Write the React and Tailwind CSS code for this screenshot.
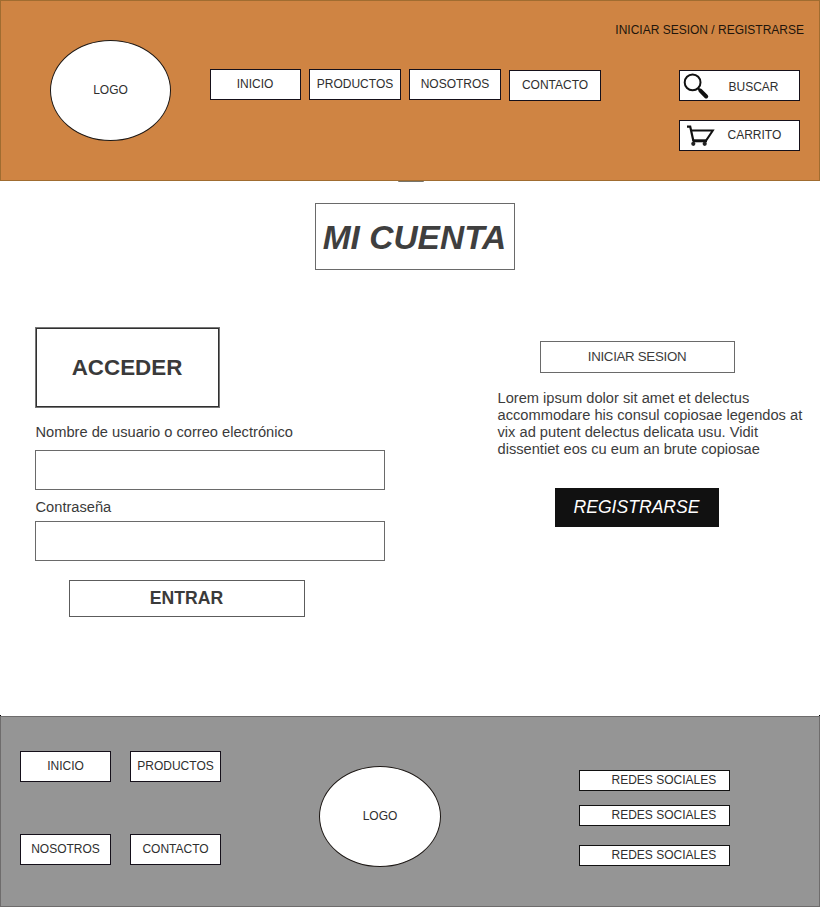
function NavBox({ label, className = 'w-[91px]' }) {
  return (
    <a className={`block h-[31px] shrink-0 border border-[#15101a] bg-white pt-[7px] text-center text-xs leading-[14px] text-[#2e2e2e] ${className}`}>
      {label}
    </a>
  )
}

function Logo({ className = '' }) {
  return (
    <div className={`flex h-[101px] shrink-0 items-center justify-center rounded-[50%] border border-[#1c1714] bg-white pb-[1px] text-xs leading-[14px] text-[#2e2e2e] ${className}`}>
      LOGO
    </div>
  )
}

function SearchIcon() {
  return (
    <svg width="28" height="28" viewBox="0 0 28 28" fill="none" stroke="#111">
      <circle cx="10.6" cy="10.4" r="7.9" strokeWidth="2" />
      <path d="M16 16.2l2.6 2.6" strokeWidth="2" />
      <path d="M18.4 18.6l5.8 5.9" strokeWidth="4" strokeLinecap="round" />
    </svg>
  )
}

function CartIcon() {
  return (
    <svg width="28" height="22" viewBox="0 0 28 22" fill="none" stroke="#111">
      <path d="M0 1.6H3.2L6.4 16" strokeWidth="2.2" />
      <path d="M4 5.6H25.8L19.2 15.4" strokeWidth="2" />
      <path d="M5.6 15.8H20" strokeWidth="3" />
      <circle cx="6.3" cy="18.8" r="2.1" fill="#222" stroke="none" />
      <circle cx="17.7" cy="18.8" r="2.1" fill="#222" stroke="none" />
    </svg>
  )
}

function Header() {
  return (
    <header className="relative flex h-[181px] items-start border border-[#a06c30] bg-[#cf8443]">
      <Logo className="mt-[39px] ml-[49px] w-[121px]" />
      <nav className="mt-[68px] ml-[39px] flex items-start gap-2">
        <NavBox label="INICIO" className="w-[91px] pr-px" />
        <NavBox label="PRODUCTOS" className="w-[92px]" />
        <NavBox label="NOSOTROS" className="w-[92px]" />
        <NavBox label="CONTACTO" className="mt-px w-[92px]" />
      </nav>
      <div className="mt-[22px] ml-auto mr-[15px] flex flex-col items-end">
        <a className="text-xs leading-[14px] whitespace-nowrap text-[#21150c]">INICIAR SESION / REGISTRARSE</a>
        <div className="mt-[33px] mr-1 flex h-[31px] w-[121px] border border-[#15101a] bg-white text-xs leading-[14px] text-[#2e2e2e]">
          <div className="mt-px ml-[2px] w-[46.5px]"><SearchIcon /></div>
          <span className="mt-[9px]">BUSCAR</span>
        </div>
        <div className="mt-[19px] mr-1 flex h-[31px] w-[121px] border border-[#15101a] bg-white text-xs leading-[14px] text-[#2e2e2e]">
          <div className="mt-1 ml-[7px] w-[40.5px]"><CartIcon /></div>
          <span className="mt-[7px]">CARRITO</span>
        </div>
      </div>
      <div className="absolute top-[180px] left-[397px] h-px w-[26px] rounded-b-full bg-[#77756c]" />
    </header>
  )
}

function Login() {
  return (
    <section className="w-[350px] text-[#3a3a3a]">
      <h2 className="flex h-[81px] w-[185px] items-center justify-center border border-[#777] pr-px text-[22.4px] leading-[26px] font-bold shadow-[inset_0_0_0_1px_#303030]">ACCEDER</h2>
      <label className="mt-4 ml-[0.5px] block text-[14.67px] leading-4">Nombre de usuario o correo electrónico</label>
      <div className="mt-[10px] h-10 border border-[#6a6a6a]" />
      <label className="mt-[9px] ml-[0.5px] block text-[14.67px] leading-4">Contraseña</label>
      <div className="mt-[6px] h-10 border border-[#6a6a6a]" />
      <button className="mt-[19px] ml-[34px] block h-[37px] w-[236px] border border-[#5c5c5c] pr-px pb-[1px] text-[17.6px] leading-5 font-bold">ENTRAR</button>
    </section>
  )
}

function Register() {
  return (
    <section className="mt-[14px] w-[310px] text-[#3c3c3c]">
      <div className="ml-[43px] flex h-8 w-[195px] items-center justify-center border border-[#6a6a6a] pr-px text-[13.3px] leading-4 tracking-[-0.3px]">INICIAR SESION</div>
      <p className="mt-[17px] ml-[0.5px] text-[14.67px] leading-[16.9px] whitespace-nowrap">
        Lorem ipsum dolor sit amet et delectus<br />
        accommodare his consul copiosae legendos at<br />
        vix ad putent delectus delicata usu. Vidit<br />
        dissentiet eos cu eum an brute copiosae
      </p>
      <button className="mt-[30px] ml-[58px] block h-[39px] w-[164px] bg-[#111] pr-px text-[17.6px] leading-5 text-white italic">REGISTRARSE</button>
    </section>
  )
}

function SocialBox({ className = '' }) {
  return (
    <a className={`block h-[21px] w-[151px] border border-[#111] bg-white pt-[2px] pl-[31.5px] text-xs leading-[14px] whitespace-nowrap text-[#2e2e2e] ${className}`}>REDES SOCIALES</a>
  )
}

function Footer() {
  return (
    <footer className="relative flex h-[191px] items-start border border-[#6e6c6c] bg-[#959595]">
      <div className="mt-[34px] ml-[19px] grid grid-cols-2 gap-x-[19px] gap-y-[52px]">
        <NavBox label="INICIO" />
        <NavBox label="PRODUCTOS" />
        <NavBox label="NOSOTROS" />
        <NavBox label="CONTACTO" />
      </div>
      <Logo className="mt-[49px] ml-[98px] w-[122px]" />
      <div className="mt-[53px] ml-[138px]">
        <SocialBox />
        <SocialBox className="mt-[14px]" />
        <SocialBox className="mt-[19px]" />
      </div>
      <div className="absolute -top-[2px] -left-px size-px bg-black" />
      <div className="absolute -top-[2px] -right-px size-px bg-black" />
    </footer>
  )
}

export default function App() {
  return (
    <div className="flex h-[907px] w-[820px] flex-col overflow-hidden bg-white font-['Liberation_Sans',Arial,sans-serif]">
      <Header />
      <main className="h-[535px]">
        <h1 className="mt-[22px] ml-[315px] flex h-[67px] w-[200px] items-center justify-center border border-[#6a6a6a] pt-[2px] pr-px text-[33.5px] leading-[38px] font-bold whitespace-nowrap text-[#3f3f3f] italic">MI CUENTA</h1>
        <div className="mt-[57px] ml-[35px] flex items-start gap-[112px]">
          <Login />
          <Register />
        </div>
      </main>
      <Footer />
    </div>
  )
}
